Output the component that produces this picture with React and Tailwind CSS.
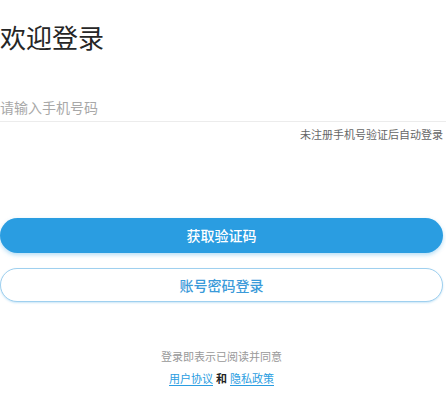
export default function App() {
  return (
    <div
      className="min-h-screen bg-white flex flex-col pr-[3px]"
      style={{ fontFamily: '"Noto Sans CJK SC", "Noto Sans", sans-serif' }}
    >
      {/* Title */}
      <h1 className="mt-[24px] text-[26px] leading-[26px] text-[#262626] font-normal">欢迎登录</h1>

      {/* Phone input */}
      <div className="mt-[42px] border-b border-[#ececec] -mr-[3px]">
        <input
          type="tel"
          placeholder="请输入手机号码"
          className="w-full h-[29px] text-[14px] text-[#333] placeholder-[#a8a8a8] outline-none bg-transparent"
        />
      </div>
      <p className="mt-[7px] text-right text-[11px] leading-[11px] text-[#666]">未注册手机号验证后自动登录</p>

      {/* Buttons */}
      <button className="mt-[78px] h-[35px] rounded-full bg-[#2a9de1] text-white text-[14px] font-medium shadow-[0_2px_4px_rgba(42,157,225,0.35)]">
        获取验证码
      </button>
      <button className="mt-[15px] h-[34px] rounded-full bg-white border border-[#9fd0ef] text-[#3a9ad9] text-[14px] font-medium shadow-[0_1px_2px_rgba(42,157,225,0.25)]">
        账号密码登录
      </button>

      {/* Agreement */}
      <p className="mt-[49px] text-center text-[11px] leading-[11px] text-[#999]">登录即表示已阅读并同意</p>
      <p className="mt-[11px] text-center text-[11px] leading-[11px]">
        <a className="text-[#2a9de1] underline underline-offset-2">用户协议</a>
        <span className="mx-[3px] font-bold text-[#222]">和</span>
        <a className="text-[#2a9de1] underline underline-offset-2">隐私政策</a>
      </p>
    </div>
  );
}
